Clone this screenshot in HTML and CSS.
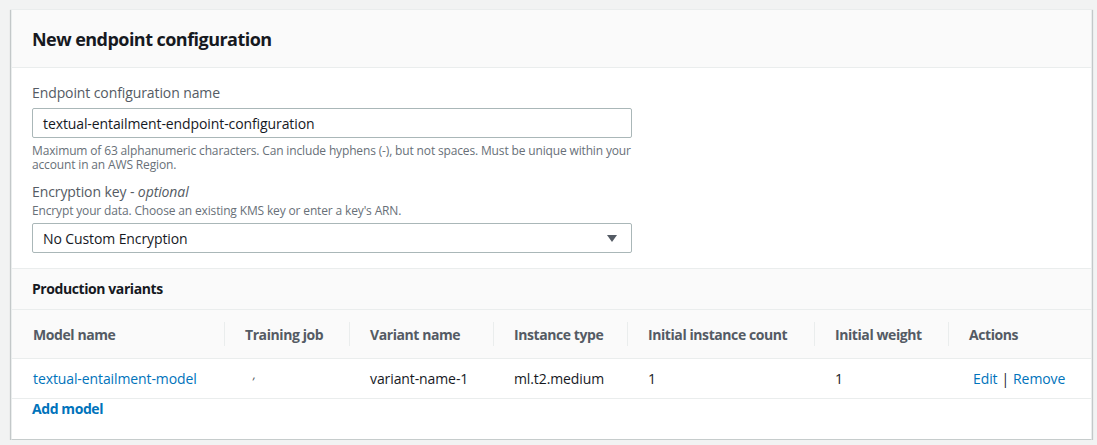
FILE: index.html
```html
<!DOCTYPE html>
<html lang="en">
<head>
<meta charset="utf-8">
<title>New endpoint configuration</title>
<link rel="stylesheet" href="styles.css">
</head>
<body>
<div class="card">
  <div class="card-header">
    <h2 class="card-title">New endpoint configuration</h2>
  </div>
  <div class="card-body">
    <div class="field">
      <label class="label">Endpoint configuration name</label>
      <div class="input">textual-entailment-endpoint-configuration</div>
      <p class="hint">Maximum of 63 alphanumeric characters. Can include hyphens (-), but not spaces. Must be unique within your account in an AWS Region.</p>
    </div>
    <div class="field field-second">
      <label class="label">Encryption key - <i>optional</i></label>
      <p class="hint hint-top">Encrypt your data. Choose an existing KMS key or enter a key's ARN.</p>
      <div class="input select">
        <span>No Custom Encryption</span>
        <svg class="caret" width="10" height="7" viewBox="0 0 10 7"><path d="M0 0 H10 L5 7 Z" fill="#545b64"/></svg>
      </div>
    </div>
  </div>
  <div class="section-head">Production variants</div>
  <div class="table">
    <div class="row head">
      <div class="cell">Model name</div>
      <div class="cell sep">Training job</div>
      <div class="cell sep">Variant name</div>
      <div class="cell sep">Instance type</div>
      <div class="cell sep">Initial instance count</div>
      <div class="cell sep">Initial weight</div>
      <div class="cell sep">Actions</div>
    </div>
    <div class="row data">
      <div class="cell"><a class="link">textual-entailment-model</a></div>
      <div class="cell"><span class="tick">,</span></div>
      <div class="cell">variant-name-1</div>
      <div class="cell">ml.t2.medium</div>
      <div class="cell">1</div>
      <div class="cell">1</div>
      <div class="cell actions"><a class="link">Edit</a> <span class="bar">|</span> <a class="link">Remove</a></div>
    </div>
  </div>
  <div class="card-footer"><a class="link strong">Add model</a></div>
</div>
</body>
</html>
```
FILE: styles.css
```css
* { box-sizing: border-box; }
html, body { margin: 0; padding: 0; }
body {
  background: #f2f3f3;
  font-family: "Open Sans", "Liberation Sans", Arial, sans-serif;
  color: #16191f;
  font-size: 14px;
  letter-spacing: -0.1px;
  padding: 9px 0 0 11px;
}
.card {
  width: 1081px;
  background: #fff;
  border: 1px solid #eaeded;
  border-bottom-color: #c6cccc;
  box-shadow: 0 1px 1px 0 rgba(0,28,36,.3), 1px 1px 1px 0 rgba(0,28,36,.15), -1px 1px 1px 0 rgba(0,28,36,.15);
}
.card-header {
  height: 58px;
  background: #fafafa;
  border-bottom: 1px solid #eaeded;
  display: flex;
  align-items: center;
  padding: 0 20px;
}
.card-title {
  margin: 0;
  font-size: 18px;
  font-weight: 700;
  line-height: 22px;
  letter-spacing: -0.03em;
  color: #16191f;
}
.card-body {
  padding: 14px 20px 15px;
  border-bottom: 1px solid #eaeded;
}
.label {
  display: block;
  font-size: 14px;
  line-height: 22px;
  color: #545b64;
}
.label i { font-style: italic; }
.input {
  width: 600px;
  height: 30px;
  margin-top: 4px;
  border: 1px solid #aab7b8;
  border-radius: 2px;
  padding: 0 10px;
  display: flex;
  align-items: center;
  font-size: 14px;
  color: #16191f;
}
.select { justify-content: space-between; padding-right: 14px; margin-top: 5px; }
.hint {
  margin: 6px 0 0;
  font-size: 12px;
  line-height: 14px;
  letter-spacing: -0.15px;
  color: #687078;
  width: 600px;
}
.hint-top { margin-top: 1px; }
.field-second { margin-top: 9px; }
.section-head {
  height: 41px;
  background: #fafafa;
  border-bottom: 1px solid #eaeded;
  display: flex;
  align-items: center;
  padding: 0 20px 1px;
  font-weight: 700;
  font-size: 14px;
  letter-spacing: -0.03em;
  color: #16191f;
}
.row {
  display: grid;
  grid-template-columns: 212px 125px 144px 134px 187px 134px 1fr;
  border-bottom: 1px solid #eaeded;
}
.row.head {
  height: 49px;
  background: #fafafa;
  font-weight: 700;
  letter-spacing: -0.03em;
  color: #545b64;
}
.row.data { height: 40px; color: #16191f; }
.cell {
  display: flex;
  align-items: center;
  padding-left: 21px;
  position: relative;
  white-space: nowrap;
}
.cell.sep::before {
  content: "";
  position: absolute;
  left: 0;
  top: 12px;
  height: 24px;
  border-left: 1px solid #eaeded;
}
.link { color: #0073bb; text-decoration: none; }
.strong { font-weight: 700; letter-spacing: -0.03em; }
.actions { padding-left: 25px; gap: 4px; }
.bar { color: #16191f; }
.tick { margin-left: 8px; font-size: 12px; color: #545b64; display: inline-block; transform: translateY(-4px) skewX(-10deg); }
.card-footer {
  padding: 0 20px 20px;
  line-height: 20px;
  font-size: 14px;
}
```
